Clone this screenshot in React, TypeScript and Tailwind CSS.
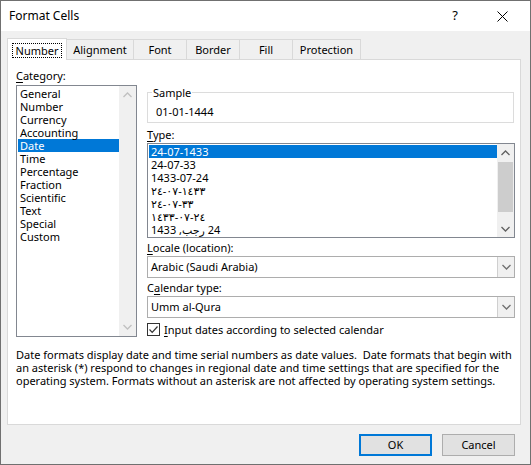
import React from "react";

const font = { fontFamily: '"Noto Sans", "DejaVu Sans", sans-serif' };

function Chevron({ up, color = "#606060" }: { up?: boolean; color?: string }) {
  return (
    <svg width="9" height="6" viewBox="0 0 9 6">
      <path
        d={up ? "M0.5 5 L4.5 1 L8.5 5" : "M0.5 1 L4.5 5 L8.5 1"}
        fill="none"
        stroke={color}
        strokeWidth="1.3"
      />
    </svg>
  );
}

function U({ children }: { children: React.ReactNode }) {
  return <span className="underline underline-offset-2">{children}</span>;
}

const categories = [
  "General",
  "Number",
  "Currency",
  "Accounting",
  "Date",
  "Time",
  "Percentage",
  "Fraction",
  "Scientific",
  "Text",
  "Special",
  "Custom",
];

function Combo({ value }: { value: string }) {
  return (
    <div className="flex h-[22px] w-[368px] border border-[#adadad] bg-white">
      <div className="flex flex-1 items-center pl-[3px] leading-[14px]">{value}</div>
      <div className="flex w-[17px] items-center justify-center border-l border-[#cfcfcf] bg-[#f0f0f0]">
        <Chevron color="#707070" />
      </div>
    </div>
  );
}

export default function App() {
  return (
    <div
      className="flex h-[465px] w-[531px] flex-col border border-[#707070] bg-[#f0f0f0] text-[11px] text-black"
      style={font}
    >
      {/* Title bar */}
      <div className="flex h-[30px] items-center bg-white">
        <div className="pl-[8px] text-[12px]">Format Cells</div>
        <div className="ml-auto mr-[39px] text-[13px]">?</div>
        <svg className="mr-[22px]" width="11" height="11" viewBox="0 0 11 11">
          <path d="M0.5 0.5 L10.5 10.5 M10.5 0.5 L0.5 10.5" stroke="#000" strokeWidth="1" />
        </svg>
      </div>

      {/* Tabs */}
      <div className="mt-[7px] flex items-end pl-[6px]">
        <div className="relative z-10 -mb-px flex h-[22px] w-[60px] items-center justify-center border border-b-0 border-[#d9d9d9] bg-white pt-[2px]">
          <span className="border border-dotted border-black px-[3px] leading-[13px]">Number</span>
        </div>
        {[
          ["Alignment", "w-[68px]"],
          ["Font", "w-[54px]"],
          ["Border", "w-[54px]"],
          ["Fill", "w-[54px]"],
          ["Protection", "w-[69px]"],
        ].map(([t, w]) => (
          <div
            key={t}
            className={`-ml-px flex h-[20px] ${w} items-center justify-center border border-b-0 border-[#d9d9d9] bg-[#f0f0f0] pt-[2px]`}
          >
            {t}
          </div>
        ))}
      </div>

      {/* Panel */}
      <div className="ml-[6px] h-[366px] w-[514px] border border-[#d9d9d9] bg-white pl-[8px] pt-[8px]">
        <div className="flex gap-[10px]">
          {/* Left column */}
          <div className="flex w-[121px] flex-col">
            <div className="h-[16px] leading-[16px]">
              <U>C</U>ategory:
            </div>
            <div className="mt-px flex h-[252px] border border-[#828790] bg-white">
              <div className="flex-1 pl-px pt-px">
                {categories.map((c) => (
                  <div
                    key={c}
                    className={`h-[13px] pl-[2px] leading-[13px] ${
                      c === "Date" ? "bg-[#0078d7] text-white" : ""
                    }`}
                  >
                    {c}
                  </div>
                ))}
              </div>
              <div className="flex w-[17px] flex-col items-center justify-between bg-[#f0f0f0] py-[6px]">
                <Chevron up color="#c0c0c0" />
                <Chevron color="#c0c0c0" />
              </div>
            </div>
          </div>

          {/* Right column */}
          <div className="flex w-[368px] flex-col">
            <div className="relative mt-[24px] h-[31px] w-[367px] border border-[#dcdcdc]">
              <div className="absolute -top-[8px] left-[4px] bg-white px-px leading-[15px]">Sample</div>
              <div className="pl-[8px] pt-[12px] leading-[14px]">01-01-1444</div>
            </div>
            <div className="mt-[4px] h-[16px] leading-[16px]">
              <U>T</U>ype:
            </div>
            <div className="flex h-[95px] border border-[#828790] bg-white">
              <div className="flex-1 pl-px pt-px">
                <div className="h-[13px] bg-[#0078d7] pl-[2px] leading-[13px] text-white">24-07-1433</div>
                <div className="h-[13px] pl-[2px] leading-[13px]">24-07-33</div>
                <div className="h-[13px] pl-[2px] leading-[13px]">1433-07-24</div>
                <div className="h-[13px] pl-[2px] leading-[13px]">
                  <bdo dir="ltr">٢٤-٠٧-١٤٣٣</bdo>
                </div>
                <div className="h-[13px] pl-[2px] leading-[13px]">
                  <bdo dir="ltr">٢٤-٠٧-٣٣</bdo>
                </div>
                <div className="h-[13px] pl-[2px] leading-[13px]">
                  <bdo dir="ltr">١٤٣٣-٠٧-٢٤</bdo>
                </div>
                <div className="h-[13px] pl-[2px] leading-[13px]">
                  <span dir="rtl" className="inline-block">
                    24 رجب, 1433
                  </span>
                </div>
              </div>
              <div className="flex w-[17px] flex-col items-center bg-[#f0f0f0]">
                <div className="flex h-[17px] items-center justify-center">
                  <Chevron up />
                </div>
                <div className="mt-px h-[50px] w-[15px] bg-[#cdcdcd]" />
                <div className="mt-auto flex h-[17px] items-center justify-center">
                  <Chevron />
                </div>
              </div>
            </div>
            <div className="mt-[2px] h-[16px] leading-[16px]">
              <U>L</U>ocale (location):
            </div>
            <Combo value="Arabic (Saudi Arabia)" />
            <div className="mt-[2px] h-[16px] leading-[16px]">
              C<U>a</U>lendar type:
            </div>
            <Combo value="Umm al-Qura" />
            <div className="mt-[5px] flex h-[13px] items-center gap-[4px]">
              <div className="flex h-[13px] w-[13px] items-center justify-center border border-[#333333] bg-white">
                <svg width="11" height="11" viewBox="0 0 11 11">
                  <path d="M1.5 5.5 L4.2 8.3 L9.5 2.5" fill="none" stroke="#333" strokeWidth="1.2" />
                </svg>
              </div>
              <span className="leading-[13px]">
                <U>I</U>nput dates according to selected calendar
              </span>
            </div>
          </div>
        </div>
        <div className="mt-[11px] w-[500px] leading-[13px]">
          Date formats display date and time serial numbers as date values.&nbsp; Date formats that begin with an
          asterisk (*) respond to changes in regional date and time settings that are specified for the operating
          system. Formats without an asterisk are not affected by operating system settings.
        </div>
      </div>

      {/* Buttons */}
      <div className="mt-[9px] flex justify-end gap-[10px] pr-[15px]">
        <div className="flex h-[22px] w-[73px] items-center justify-center border-2 border-[#0078d7] bg-[#e1e1e1]">
          OK
        </div>
        <div className="flex h-[22px] w-[73px] items-center justify-center border border-[#adadad] bg-[#e1e1e1]">
          Cancel
        </div>
      </div>
    </div>
  );
}
